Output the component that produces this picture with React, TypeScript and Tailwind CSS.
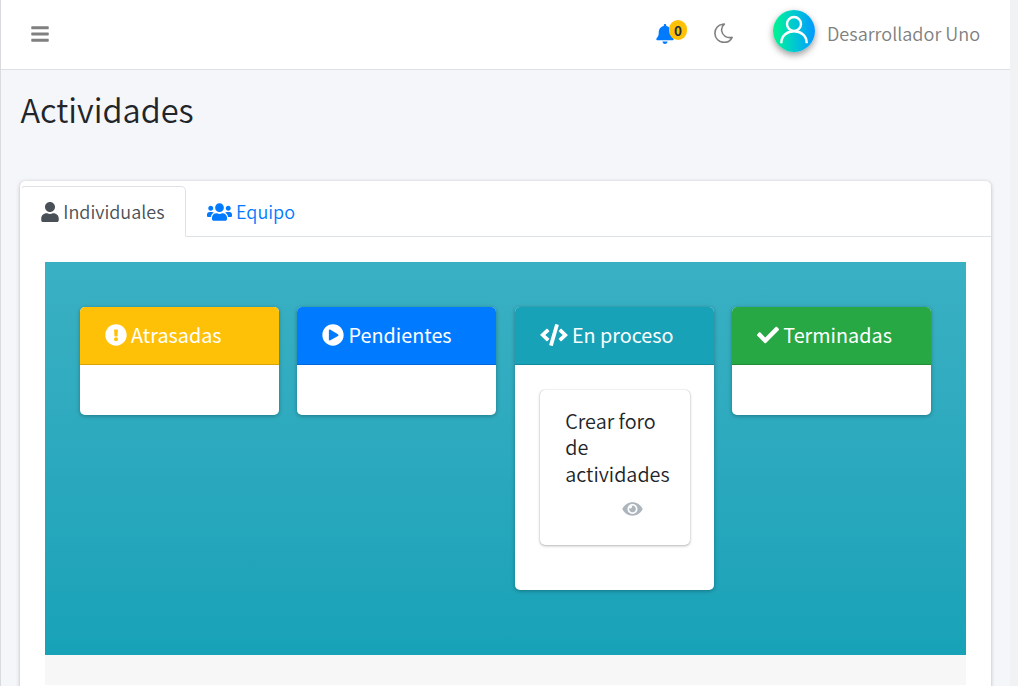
import type { ReactNode } from "react";
import { FaBars, FaBell, FaCheck, FaCode, FaExclamationCircle, FaEye, FaPlayCircle, FaUser, FaUsers } from "react-icons/fa";

function Moon() {
  return (
    <svg viewBox="0 0 20 20" className="ml-[27px] mt-[23px] h-[20px] w-[20px]" fill="none" stroke="currentColor" strokeWidth="1.6" strokeLinejoin="round">
      <path d="M8.800 1.200C4 1.700 0.900 5.600 0.900 10.200C0.900 15.400 5 19.400 10.200 19.400C13.600 19.400 16.700 17.500 18.100 14.400C12.900 15.600 8.400 12.500 7.700 8C7.300 5.200 8 3 10.300 1.100Z" />
    </svg>
  );
}

function Avatar() {
  return (
    <div className="ml-[39px] mt-[10px] h-[42px] w-[42px] rounded-full bg-linear-to-r from-[#00f58c] to-[#0a96ff] shadow-[0_3px_7px_rgba(0,0,0,0.4)]">
      <svg viewBox="0 0 42 42" className="h-[42px] w-[42px]" fill="none" stroke="white" strokeWidth="2.4">
        <circle cx="21" cy="14" r="7" />
        <path d="M8.300 33.200C8.300 17.300 33.700 17.300 33.700 33.200" />
      </svg>
    </div>
  );
}

type ColumnProps = { title: string; icon: ReactNode; color: string; children?: ReactNode };

function Column({ title, icon, color, children }: ColumnProps) {
  return (
    <section className="min-w-0 overflow-hidden rounded-[5px] bg-white shadow-[0_1px_4px_rgba(0,0,0,0.3)]">
      <h2 className={`flex h-[58px] items-center border-b border-black/15 pb-px pl-[25px] text-[19.800px] text-white ${color}`}>
        {icon}
        <span className="ml-[4.100px] whitespace-nowrap">{title}</span>
      </h2>
      {children ?? <div className="h-[50px]" />}
    </section>
  );
}

export default function App() {
  return (
    <div className="h-[686px] w-[1018px] overflow-hidden bg-[#f1f2f4] font-['Noto_Sans_CJK_SC','Source_Sans_Pro',sans-serif] text-[#212529]">
      <div className="h-full w-[1010px] border-l border-[#d9dadd] bg-[#f4f6f9]">
        <header className="flex h-[70px] items-start border-b border-[#dee2e6] bg-white text-[#808080]">
          <FaBars className="ml-[30px] mt-[23.500px] h-[20px] w-[18px]" />
          <div className="relative ml-[606.500px] mt-[23.500px] h-[20px] w-[31.500px] text-[#007bff]">
            <FaBell className="h-[20px] w-[18px]" />
            <span className="absolute left-[13.500px] top-[-3.500px] flex h-[20px] w-[18px] items-center justify-center rounded-full bg-[#ffc107] text-[13.500px] font-bold leading-none text-[#1f2d3d]"><span className="mt-px">0</span></span>
          </div>
          <Moon />
          <Avatar />
          <span className="ml-[12px] mt-[18px] whitespace-nowrap text-[18.100px] leading-[30px] font-[350]">Desarrollador Uno</span>
        </header>

        <h1 className="ml-[19.500px] mt-[16px] h-[95px] text-[32.600px] leading-[45px] font-[350]">Actividades</h1>

        <main className="ml-[19px] h-[600px] w-[971px] rounded-[5px] bg-white shadow-[0_0_1px_rgba(0,0,0,0.15),0_1px_4px_rgba(0,0,0,0.22)]">
          <nav className="flex h-[56px] border-b border-[#dee2e6] pt-[5px] text-[18px]">
            <a className="flex h-[51px] w-[166px] items-center rounded-t-[5px] border border-b-white border-l-transparent border-[#dee2e6] bg-white pl-[20px] text-[#495057]">
              <FaUser className="h-[20px] w-[18px]" />
              <span className="ml-[4.300px] font-[350]">Individuales</span>
            </a>
            <a className="flex h-[51px] items-center pl-[21px] text-[#007bff]">
              <FaUsers className="h-[20px] w-[25px]" />
              <span className="ml-[4px] font-[350]">Equipo</span>
            </a>
          </nav>

          <div className="mx-[25px] mt-[25px] h-[423px] bg-[#f7f7f7]">
            <div className="grid h-[393px] grid-cols-[199px_199px_199px_199px] items-start gap-[18.400px] bg-linear-to-b from-[#3ab0c3] to-[#17a2b8] px-[35px] pt-[45px]">
              <Column title="Atrasadas" color="bg-[#ffc107]" icon={<FaExclamationCircle className="h-[22px] w-[22px]" />} />
              <Column title="Pendientes" color="bg-[#007bff]" icon={<FaPlayCircle className="h-[22px] w-[22px]" />} />
              <Column title="En proceso" color="bg-[#17a2b8]" icon={<FaCode className="h-[22px] w-[28px]" />}>
                <div className="h-[225px] pl-[25px] pr-[24px] pt-[25px]">
                  <article className="h-[155px] rounded-[5px] bg-white pl-[25.500px] pt-[18px] shadow-[0_0_1px_rgba(0,0,0,0.25),0_1px_3px_rgba(0,0,0,0.28)]">
                    <p className="w-[110px] text-[19.800px] leading-[26.400px] font-[350]">
                      Crear foro<br />de<br />actividades
                    </p>
                    <FaEye className="ml-[57px] mt-[12.800px] h-[18px] w-[21px] text-[#adb5bd]" />
                  </article>
                </div>
              </Column>
              <Column title="Terminadas" color="bg-[#28a745]" icon={<FaCheck className="h-[22px] w-[22px]" />} />
            </div>
          </div>
        </main>
      </div>
    </div>
  );
}
